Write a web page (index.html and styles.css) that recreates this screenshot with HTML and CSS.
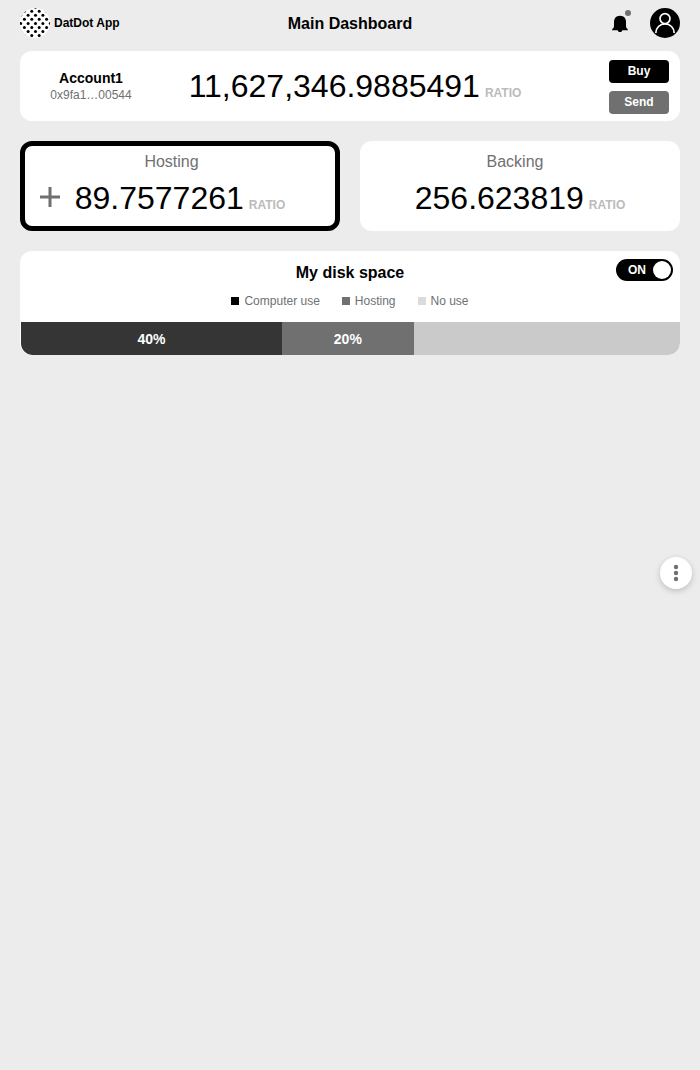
FILE: index.html
```html
<!DOCTYPE html>
<html lang="en">
<head>
<meta charset="utf-8">
<meta name="viewport" content="width=device-width, initial-scale=1">
<title>DatDot App</title>
<link rel="stylesheet" href="styles.css">
</head>
<body>
<header class="topbar">
  <a class="brand" href="#">
    <svg class="brand-logo" viewBox="0 0 30 30" aria-hidden="true">
      <defs>
        <clipPath id="disc"><circle cx="15" cy="15" r="15"/></clipPath>
        <g id="row-a">
          <circle cx="0.7" cy="0" r="1.5"/><circle cx="8.1" cy="0" r="1.5"/><circle cx="15.5" cy="0" r="1.5"/><circle cx="22.9" cy="0" r="1.5"/><circle cx="30.3" cy="0" r="1.5"/>
        </g>
        <g id="row-b">
          <circle cx="4.4" cy="0" r="1.5"/><circle cx="11.8" cy="0" r="1.5"/><circle cx="19.2" cy="0" r="1.5"/><circle cx="26.6" cy="0" r="1.5"/>
        </g>
      </defs>
      <circle cx="15" cy="15" r="15" fill="#fff"/>
      <g clip-path="url(#disc)">
        <use href="#row-a" y="-0.8"/>
        <use href="#row-b" y="3.2"/>
        <use href="#row-a" y="7.3"/>
        <use href="#row-b" y="11.3"/>
        <use href="#row-a" y="15.4"/>
        <use href="#row-b" y="19.4"/>
        <use href="#row-a" y="23.5"/>
        <use href="#row-b" y="27.5"/>
      </g>
    </svg>
    <span>DatDot App</span>
  </a>
  <h1 class="page-title">Main Dashboard</h1>
  <nav class="actions">
    <button class="icon-button bell" aria-label="Notifications">
      <svg class="bell-icon" viewBox="0 0 20 24" aria-hidden="true">
        <path d="M10 4.700C6 4.700 4 7.500 4 11V15C4 17.500 2 17.500 2 19.200H7.600C8 20.600 9 21 10 21S12 20.600 12.400 19.200H18C18 17.500 16 17.500 16 15V11C16 7.500 14 4.700 10 4.700Z"/>
        <circle cx="18" cy="2" r="3" fill="#707070"/>
      </svg>
    </button>
    <button class="icon-button" aria-label="Profile">
      <svg class="avatar-icon" viewBox="0 0 30 30" aria-hidden="true">
        <circle cx="15" cy="15" r="15"/>
        <circle cx="15" cy="10.600" r="5" fill="none" stroke="#fff" stroke-width="1.700"/>
        <path d="M5.800 25A9.200 9.200 0 0 1 24.200 25" fill="none" stroke="#fff" stroke-width="1.700"/>
      </svg>
    </button>
  </nav>
</header>

<main class="dashboard">
  <section class="card account">
    <div class="account-id">
      <h2 class="account-name">Account1</h2>
      <span class="account-address">0x9fa1…00544</span>
    </div>
    <p class="amount"><span class="value">11,627,346.9885491</span><span class="unit">RATIO</span></p>
    <div class="account-actions">
      <button class="button">Buy</button>
      <button class="button button-muted">Send</button>
    </div>
  </section>

  <div class="balances">
    <section class="card balance balance-active">
      <h2 class="balance-title">Hosting</h2>
      <div class="balance-row">
        <svg class="plus-icon" viewBox="0 0 20 20" aria-hidden="true"><path d="M10 0V20M0 10H20"/></svg>
        <p class="amount"><span class="value">89.7577261</span><span class="unit">RATIO</span></p>
      </div>
    </section>
    <section class="card balance">
      <h2 class="balance-title">Backing</h2>
      <p class="amount"><span class="value">256.623819</span><span class="unit">RATIO</span></p>
    </section>
  </div>

  <section class="card disk">
    <div class="disk-head">
      <h2 class="disk-title">My disk space</h2>
      <label class="switch">
        <input class="switch-input" type="checkbox" checked>
        <span class="switch-label">ON</span>
        <span class="switch-knob"></span>
      </label>
    </div>
    <ul class="legend">
      <li class="legend-item computer">Computer use</li>
      <li class="legend-item hosting">Hosting</li>
      <li class="legend-item free">No use</li>
    </ul>
    <div class="usage">
      <div class="usage-part usage-computer" style="width:39.6%">40%</div>
      <div class="usage-part usage-hosting" style="width:20%">20%</div>
    </div>
  </section>
</main>

<button class="more" aria-label="More options">
  <svg class="more-icon" viewBox="0 0 6 18" aria-hidden="true">
    <circle cx="3" cy="3" r="2.200"/><circle cx="3" cy="9" r="2.200"/><circle cx="3" cy="15" r="2.200"/>
  </svg>
</button>
</body>
</html>
```
FILE: styles.css
```css
* {
  box-sizing: border-box;
}

body {
  margin: 0;
  min-height: 100vh;
  background: #ececec;
  color: #000;
  font-family: "Liberation Sans", Arial, sans-serif;
}

h1, h2, p, ul {
  margin: 0;
  padding: 0;
}

button {
  border: 0;
  padding: 0;
  font-family: inherit;
  cursor: pointer;
}

.topbar {
  display: grid;
  grid-template-columns: 1fr auto 1fr;
  align-items: center;
  padding: 8px 20px;
}

.brand {
  display: flex;
  align-items: center;
  gap: 4px;
  color: #000;
  font-size: 12px;
  font-weight: bold;
  text-decoration: none;
}

.brand-logo, .avatar-icon {
  display: block;
  width: 30px;
  height: 30px;
}

.page-title {
  padding-top: 2px;
  font-size: 16px;
  line-height: 22px;
}

.actions {
  display: flex;
  justify-content: flex-end;
  align-items: center;
  gap: 20px;
}

.icon-button {
  background: none;
}

.bell-icon {
  display: block;
  width: 20px;
  height: 24px;
  overflow: visible;
}

.dashboard {
  display: flex;
  flex-direction: column;
  gap: 20px;
  padding: 5px 20px 20px;
}

.card {
  border-radius: 12px;
  background: #fff;
}

.account {
  display: grid;
  grid-template-columns: 142px 1fr 132px;
  align-items: center;
  min-height: 70px;
}

.account-id {
  text-align: center;
}

.account-name {
  font-size: 14px;
  line-height: 18px;
}

.account-address {
  display: block;
  color: #707070;
  font-size: 12px;
  line-height: 16px;
}

.amount {
  display: flex;
  justify-content: center;
  align-items: baseline;
  gap: 5px;
}

.value {
  font-size: 32px;
  line-height: 38px;
}

.unit {
  color: #bbb;
  font-size: 12px;
  font-weight: bold;
}

.account-actions {
  display: flex;
  flex-direction: column;
  align-items: flex-end;
  gap: 8px;
  padding: 2px 11px 0 0;
}

.button {
  width: 60px;
  height: 23px;
  padding-bottom: 2px;
  border-radius: 4px;
  background: #000;
  color: #fff;
  font-size: 12px;
  font-weight: bold;
}

.button-muted {
  background: #707070;
}

.balances {
  display: grid;
  grid-template-columns: 1fr 1fr;
  gap: 20px;
}

.balance {
  min-height: 90px;
  padding: 11px 10px;
}

.balance-active {
  padding: 6px 10px 5px;
  border: 5px solid #000;
}

.balance-title {
  margin-bottom: 7px;
  padding-right: 10px;
  color: #707070;
  font-size: 16px;
  font-weight: normal;
  line-height: 20px;
  text-align: center;
}

.balance-active .balance-title {
  padding-right: 17px;
}

.balance-row {
  display: grid;
  grid-template-columns: 30px 1fr 30px;
  align-items: center;
}

.plus-icon {
  display: block;
  width: 20px;
  height: 20px;
  margin: 0 0 2px 5px;
  fill: none;
  stroke: #707070;
  stroke-width: 3;
}

.disk {
  overflow: hidden;
}

.disk-head {
  display: grid;
  grid-template-columns: 1fr auto 1fr;
  align-items: start;
  padding: 8px 7px 0;
}

.disk-title {
  grid-column: 2;
  padding-top: 3px;
  font-size: 16px;
  line-height: 22px;
}

.switch {
  display: flex;
  justify-self: end;
  justify-content: space-between;
  align-items: center;
  position: relative;
  width: 57px;
  height: 22px;
  padding: 0 2px 0 12px;
  border-radius: 12px;
  background: #000;
  color: #fff;
  font-size: 12px;
  font-weight: bold;
}

.switch-input {
  position: absolute;
  inset: 0;
  width: 100%;
  height: 100%;
  margin: 0;
  opacity: 0;
  cursor: pointer;
}

.switch-knob {
  width: 18px;
  height: 18px;
  border-radius: 50%;
  background: #fff;
}

.legend {
  display: flex;
  justify-content: center;
  gap: 22px;
  padding: 9px 0 13px;
  list-style: none;
  color: #707070;
  font-size: 12px;
  line-height: 16px;
}

.legend-item {
  display: flex;
  align-items: center;
  gap: 5px;
}

.legend-item::before {
  width: 8px;
  height: 8px;
  background: #000;
  content: "";
}

.hosting::before {
  background: #707070;
}

.free::before {
  background: #dbdbdb;
}

.usage {
  display: flex;
  height: 33px;
  margin-left: 1px;
  border-radius: 0 0 12px 12px;
  background: #cacaca;
  overflow: hidden;
}

.usage-part {
  color: #fff;
  font-size: 14px;
  font-weight: bold;
  line-height: 34px;
  text-align: center;
}

.usage-computer {
  background: #353535;
}

.usage-hosting {
  background: #707070;
}

.more {
  display: grid;
  place-items: center;
  position: fixed;
  top: 557px;
  right: 8px;
  width: 32px;
  height: 32px;
  border-radius: 50%;
  background: #fff;
  box-shadow: 0 2px 6px rgba(0, 0, 0, 0.2);
}

.more-icon {
  width: 6px;
  height: 18px;
  fill: #707070;
}
```
